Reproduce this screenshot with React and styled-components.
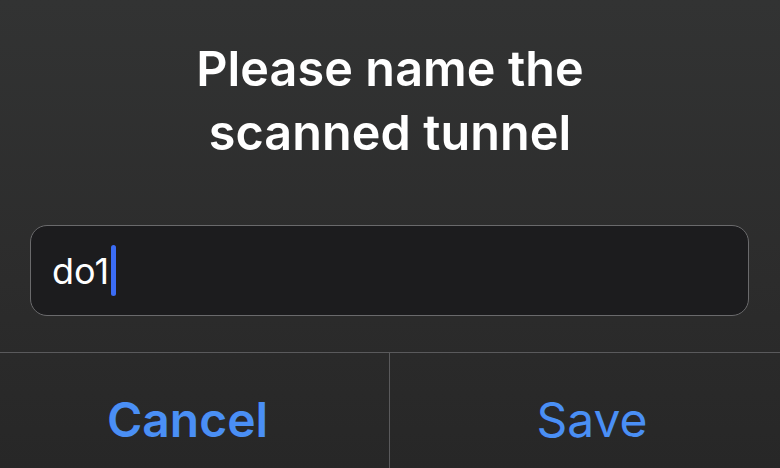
import React from "react";
import styled, { createGlobalStyle } from "styled-components";

const Global = createGlobalStyle`
  html, body { margin: 0; padding: 0; width: 780px; height: 468px; overflow: hidden; }
  body { background: #2b2b2b; font-family: Inter, "Noto Sans", sans-serif; -webkit-font-smoothing: antialiased; }
`;

const Dialog = styled.div`
  width: 780px;
  height: 468px;
  display: flex;
  flex-direction: column;
  background: linear-gradient(180deg, #323333 0%, #2c2c2c 60%, #272727 100%);
`;

const Title = styled.h1`
  margin: 0;
  padding: 37px 40px 0;
  text-align: center;
  color: #ffffff;
  font-size: 48.5px;
  font-weight: 600;
  line-height: 64px;
  letter-spacing: 0.1px;
`;

const FieldWrap = styled.div`
  padding: 0 31px 0 30px;
  margin-top: 60px;
`;

const Field = styled.div`
  height: 91px;
  box-sizing: border-box;
  border: 1px solid #6a6a6c;
  border-radius: 17px;
  background: #1c1c1e;
  display: flex;
  align-items: center;
  padding-left: 21px;
  color: #ffffff;
  font-size: 36px;
  font-weight: 400;
`;

const Caret = styled.span`
  display: inline-block;
  width: 5px;
  height: 51px;
  border-radius: 3px;
  background: #3b6cf5;
  margin-left: 2px;
`;

const Actions = styled.div`
  margin-top: 36px;
  flex: 1;
  display: grid;
  grid-template-columns: 389px 1fr;
  border-top: 1px solid #5a5a5c;
`;

const Action = styled.button`
  appearance: none;
  background: transparent;
  border: none;
  border-left: ${(p) => (p.$divider ? "1px solid #5a5a5c" : "none")};
  color: #4a8ff5;
  font-family: Inter, "Noto Sans", sans-serif;
  font-size: 48px;
  font-weight: ${(p) => (p.$bold ? 600 : 400)};
  padding: 18px ${(p) => (p.$bold ? "14px" : "0")} 0 ${(p) => (p.$bold ? "0" : "14px")};
  display: flex;
  align-items: center;
  justify-content: center;
`;

export default function App() {
  return (
    <>
      <Global />
      <Dialog>
        <Title>
          Please name the
          <br />
          scanned tunnel
        </Title>
        <FieldWrap>
          <Field>
            do1
            <Caret />
          </Field>
        </FieldWrap>
        <Actions>
          <Action $bold>Cancel</Action>
          <Action $divider>Save</Action>
        </Actions>
      </Dialog>
    </>
  );
}
